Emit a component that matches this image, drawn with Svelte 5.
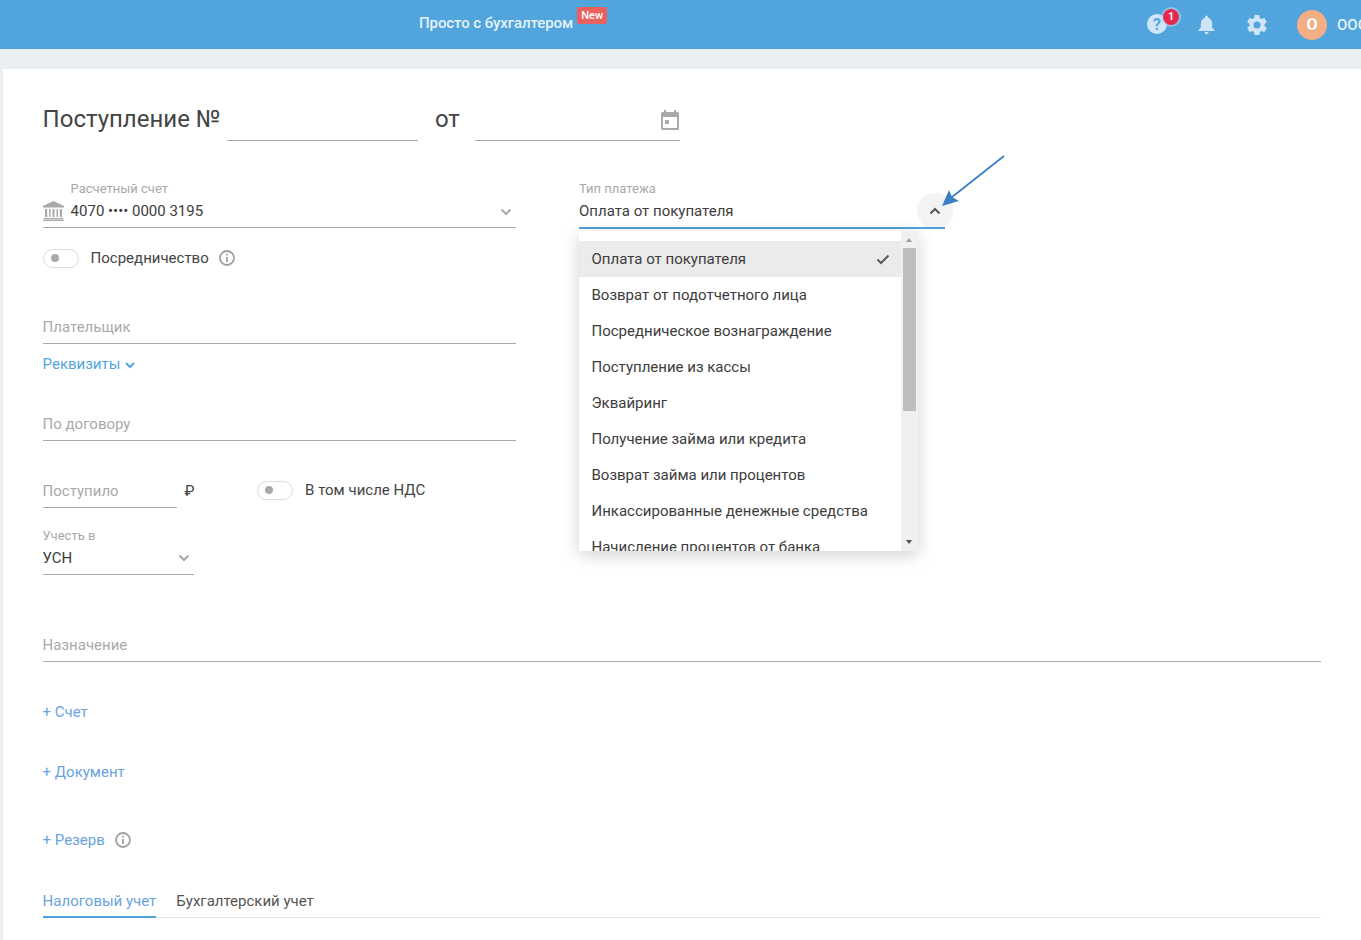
<script>
  const options = [
    'Оплата от покупателя',
    'Возврат от подотчетного лица',
    'Посредническое вознаграждение',
    'Поступление из кассы',
    'Эквайринг',
    'Получение займа или кредита',
    'Возврат займа или процентов',
    'Инкассированные денежные средства',
    'Начисление процентов от банка'
  ];
</script>

<div class="page">
  <header class="topbar">
    <div class="promo">
      <span class="promo-text">Просто с бухгалтером</span>
      <span class="new">New</span>
    </div>
    <div class="actions">
      <div class="help">
        <svg width="20" height="20" viewBox="0 0 20 20"><circle cx="10" cy="10" r="10" fill="#cfe5f7"/><text x="10" y="16" text-anchor="middle" class="qmark">?</text></svg>
        <span class="badge">1</span>
      </div>
      <svg class="bell" width="17" height="20" viewBox="0 0 18 20"><path fill="#cfe5f7" d="M9 0a1.600 1.600 0 0 1 1.600 1.600v.6C13.400 3 15 5.400 15 8.400v4.400l2.500 2.600v.9H.5v-.9L3 12.800V8.400C3 5.400 4.600 3 7.400 2.200v-.6A1.600 1.600 0 0 1 9 0zM6.800 17.500h4.400a2.200 2.200 0 0 1-4.400 0z"/></svg>
      <svg class="gear" width="24" height="24" viewBox="0 0 24 24"><path fill="#cfe5f7" d="M19.430 12.980c.04-.32.07-.64.07-.98s-.03-.66-.07-.98l2.110-1.650c.19-.15.24-.42.12-.64l-2-3.460c-.12-.22-.39-.3-.61-.22l-2.490 1c-.52-.4-1.080-.73-1.690-.98l-.38-2.650A.49.490 0 0 0 14 2h-4c-.25 0-.46.180-.49.420l-.38 2.650c-.61.250-1.170.59-1.690.98l-2.490-1c-.23-.09-.49 0-.61.220l-2 3.460c-.13.220-.07.490.12.640l2.110 1.650c-.04.320-.07.650-.07.980s.03.660.07.980l-2.110 1.650c-.19.150-.24.420-.12.640l2 3.460c.12.220.39.300.61.220l2.490-1c.52.400 1.080.730 1.690.980l.38 2.650c.03.240.24.420.49.420h4c.25 0 .46-.180.49-.420l.38-2.650c.61-.250 1.170-.590 1.690-.980l2.490 1c.23.090.49 0 .61-.220l2-3.460c.12-.220.07-.490-.12-.640l-2.110-1.650zM12 15.500a3.500 3.500 0 1 1 0-7 3.500 3.500 0 0 1 0 7z"/></svg>
      <span class="avatar">О</span>
      <span class="org">ООО</span>
    </div>
  </header>

  <main class="card">
    <div class="title-row">
      <h1 class="title">Поступление №</h1>
      <span class="line number"></span>
      <span class="title ot">от</span>
      <span class="line date">
        <svg width="20" height="20" viewBox="0 0 20 20"><path fill="#a9a9a9" d="M4 0h2v2h8V0h2v2h1.500A1.500 1.500 0 0 1 19 3.500v15a1.500 1.500 0 0 1-1.500 1.500h-15A1.500 1.500 0 0 1 1 18.500v-15A1.500 1.500 0 0 1 2.500 2H4zM3 7v11h14V7zm2 3h4v4H5z"/></svg>
      </span>
    </div>

    <div class="columns">
      <div class="left">
        <div class="field account">
          <svg class="bank" width="21" height="20" viewBox="0 0 21 20"><path fill="#a9a9a9" d="M10.500 0 21 5v1.500H0V5zM2 8h2.200v8H2zm4 0h1.500v8H6zm3.500 0h2v8h-2zm4 0H15v8h-1.500zm3.300 0H19v8h-2.200zM1 17h19v1.200H1zM0 18.800h21V20H0z"/></svg>
          <div class="value-wrap">
            <span class="label">Расчетный счет</span>
            <span class="value">4070 •••• 0000 3195</span>
          </div>
          <svg class="chev" width="12" height="8" viewBox="0 0 12 8"><path d="M1.500 1.500 6 6l4.500-4.500" fill="none" stroke="#a9a9a9" stroke-width="2"/></svg>
        </div>

        <div class="switch-row mediator">
          <span class="toggle"><i></i></span>
          <span class="text">Посредничество</span>
          <svg class="info" width="16" height="16" viewBox="0 0 16 16"><circle cx="8" cy="8" r="7" fill="none" stroke="#a0a0a0" stroke-width="1.800"/><path fill="#a0a0a0" d="M7.100 7h1.800v5H7.100zM7.100 3.800h1.800v1.800H7.100z"/></svg>
        </div>

        <div class="field payer"><span class="placeholder">Плательщик</span></div>
        <a class="link details">Реквизиты
          <svg width="10" height="7" viewBox="0 0 10 7"><path d="M1 1l4 4 4-4" fill="none" stroke="#52a5dc" stroke-width="2"/></svg>
        </a>
        <div class="field contract"><span class="placeholder">По договору</span></div>

        <div class="amount-row">
          <div class="field amount"><span class="placeholder">Поступило</span></div>
          <span class="rub">₽</span>
          <div class="switch-row vat">
            <span class="toggle"><i></i></span>
            <span class="text">В том числе НДС</span>
          </div>
        </div>

        <div class="field tax">
          <div class="value-wrap">
            <span class="label">Учесть в</span>
            <span class="value">УСН</span>
          </div>
          <svg class="chev" width="12" height="8" viewBox="0 0 12 8"><path d="M1.500 1.500 6 6l4.500-4.500" fill="none" stroke="#a9a9a9" stroke-width="2"/></svg>
        </div>
      </div>

      <div class="right">
        <div class="field type">
          <div class="value-wrap">
            <span class="label">Тип платежа</span>
            <span class="value">Оплата от покупателя</span>
          </div>
          <span class="round">
            <svg width="12" height="8" viewBox="0 0 12 8"><path d="M1.500 6.500 6 2l4.500 4.500" fill="none" stroke="#555" stroke-width="2"/></svg>
          </span>
        </div>

        <div class="menu">
          <ul class="list">
            {#each options as option, i}
              <li class:selected={i === 0}>
                <span>{option}</span>
                {#if i === 0}
                  <svg width="14" height="11" viewBox="0 0 14 11"><path d="M1.500 5.500 5 9l7.500-7.500" fill="none" stroke="#5a5a5a" stroke-width="2"/></svg>
                {/if}
              </li>
            {/each}
          </ul>
          <div class="scrollbar">
            <span class="up"></span>
            <span class="thumb"></span>
            <span class="down"></span>
          </div>
        </div>

        <svg class="arrow" width="66" height="54" viewBox="0 0 66 54">
          <path d="M65 1 8 46" stroke="#3a80c2" stroke-width="1.800" fill="none"/>
          <path d="M3 51 10 35 13 42 20 46z" fill="#3a80c2"/>
        </svg>
      </div>
    </div>

    <div class="field purpose"><span class="placeholder">Назначение</span></div>

    <a class="link add account-add">+ Счет</a>
    <a class="link add doc-add">+ Документ</a>
    <div class="reserve">
      <a class="link add">+ Резерв</a>
      <svg class="info" width="16" height="16" viewBox="0 0 16 16"><circle cx="8" cy="8" r="7" fill="none" stroke="#a0a0a0" stroke-width="1.800"/><path fill="#a0a0a0" d="M7.100 7h1.800v5H7.100zM7.100 3.800h1.800v1.800H7.100z"/></svg>
    </div>

    <nav class="tabs">
      <span class="tab active">Налоговый учет</span>
      <span class="tab">Бухгалтерский учет</span>
    </nav>
  </main>
</div>

<style>
  :global(body) {
    margin: 0;
    background: #ebeff2;
    overflow: hidden;
  }
  .page {
    height: 940px;
    overflow: hidden;
    font-family: Roboto, sans-serif;
    font-size: 15px;
    color: #444;
  }
  .topbar {
    height: 49px;
    background: #52a5dc;
    display: flex;
    justify-content: space-between;
    align-items: center;
    padding-left: 419px;
    box-sizing: border-box;
    overflow: hidden;
  }
  .promo {
    display: flex;
    align-items: flex-start;
    color: #e4f1fb;
    font-weight: 500;
    margin-top: -8px;
  }
  .promo-text {
    margin-top: 5px;
    letter-spacing: -0.08px;
  }
  .new {
    margin-left: 4px;
    margin-top: -2px;
    background: #e8615f;
    color: #fff;
    font-size: 11px;
    line-height: 17px;
    padding: 0 4px;
    border-radius: 2px;
    font-weight: 500;
  }
  .actions {
    display: flex;
    align-items: center;
    width: 215px;
    flex: none;
    white-space: nowrap;
    margin-right: -1px;
  }
  .help {
    position: relative;
    width: 20px;
    height: 20px;
    margin-top: -1px;
    flex: none;
  }
  .help svg {
    display: block;
  }
  .qmark {
    font: 700 16px Roboto, sans-serif;
    fill: #52a5dc;
  }
  .badge {
    position: absolute;
    left: 16px;
    top: -5px;
    width: 16px;
    height: 16px;
    border-radius: 50%;
    background: #e8294f;
    color: #fff;
    font-size: 10px;
    font-weight: 700;
    line-height: 16px;
    text-align: center;
    box-shadow: 0 0 0 2px rgba(180, 215, 240, 0.6);
  }
  .bell {
    margin-left: 31px;
    flex: none;
  }
  .gear {
    margin-left: 30px;
    flex: none;
  }
  .avatar {
    margin-left: 28px;
    width: 30px;
    height: 30px;
    flex: none;
    border-radius: 50%;
    background: #f4ae85;
    color: #fff;
    font-weight: 700;
    font-size: 16px;
    line-height: 30px;
    text-align: center;
  }
  .org {
    margin-left: 10px;
    color: #e4f1fb;
    font-weight: 500;
    font-size: 15px;
  }

  .card {
    margin: 20px 0 0 3px;
    background: #fff;
    height: 871px;
    padding: 0 40px 0 39.600px;
    box-sizing: border-box;
  }
  .title-row {
    padding-top: 31px;
    display: flex;
    align-items: flex-end;
    height: 72px;
    box-sizing: border-box;
  }
  .title {
    margin: 0;
    font-size: 24px;
    font-weight: 400;
    line-height: 36px;
    height: 40px;
    color: #444;
  }
  .line {
    display: flex;
    justify-content: flex-end;
    align-items: center;
    box-sizing: border-box;
    height: 40px;
    border-bottom: 1px solid #aaa;
  }
  .number {
    width: 191px;
    margin-left: 6.400px;
  }
  .ot {
    margin-left: 17px;
  }
  .date {
    width: 205px;
    margin-left: 15px;
  }
  .date svg {
    margin-bottom: 2px;
  }

  .columns {
    display: grid;
    grid-template-columns: 473px 366px;
    column-gap: 63.400px;
    align-items: start;
    margin-top: 39px;
  }
  .field {
    display: flex;
    align-items: flex-end;
    border-bottom: 1px solid #aaa;
    box-sizing: border-box;
  }
  .value-wrap {
    flex: 1;
    display: flex;
    flex-direction: column;
  }
  .label {
    font-size: 13px;
    color: #a9a9a9;
    line-height: 16px;
  }
  .value {
    color: #3d3d3d;
    line-height: 18px;
    margin-top: 5px;
    margin-bottom: 7px;
  }
  .placeholder {
    color: #a9a9a9;
    line-height: 18px;
    margin-bottom: 7px;
  }
  .account {
    height: 48px;
  }
  .bank {
    margin: 0 7px 6px 0;
    flex: none;
  }
  .chev {
    margin: 0 4px 11px 0;
    flex: none;
  }
  .switch-row {
    display: flex;
    align-items: center;
  }
  .mediator {
    height: 20px;
    margin-top: 20px;
  }
  .toggle {
    width: 36px;
    height: 19px;
    box-sizing: border-box;
    border: 1px solid #ddd;
    border-radius: 10px;
    display: flex;
    align-items: center;
    padding-left: 7px;
    flex: none;
  }
  .toggle i {
    width: 8px;
    height: 8px;
    border-radius: 50%;
    background: #a9a9a9;
  }
  .text {
    margin-left: 12px;
    color: #444;
    white-space: nowrap;
  }
  .info {
    flex: none;
  }
  .mediator .info {
    margin-left: 10px;
  }
  .payer {
    height: 36px;
    margin-top: 40px;
  }
  .link {
    color: #52a5dc;
    display: block;
  }
  .details {
    display: flex;
    align-items: center;
    gap: 5px;
    line-height: 18px;
    margin-top: 11px;
  }
  .details svg {
    margin-top: 2px;
  }
  .contract {
    height: 36px;
    margin-top: 32px;
  }
  .amount-row {
    display: flex;
    align-items: flex-end;
    margin-top: 31px;
  }
  .amount {
    width: 134px;
    height: 36px;
  }
  .rub {
    margin: 0 0 8px 8px;
    line-height: 18px;
    width: 72px;
  }
  .vat {
    margin-bottom: 8px;
    height: 20px;
  }
  .vat .text {
    margin-left: 12.500px;
  }
  .tax {
    width: 151px;
    height: 47px;
    margin-top: 20px;
  }
  .tax .chev {
    margin-bottom: 12px;
  }

  .right {
    position: relative;
  }
  .type {
    height: 49px;
    border-bottom: none;
    padding-bottom: 2px;
  }
  .type::after {
    content: '';
    position: absolute;
    left: 0;
    top: 47px;
    width: 366px;
    height: 2px;
    background: #4ea1da;
  }
  .round {
    position: absolute;
    left: 338px;
    top: 13px;
    width: 36px;
    height: 36px;
    border-radius: 50%;
    background: #f3f3f3;
    display: flex;
    align-items: center;
    justify-content: center;
  }
  .menu {
    position: absolute;
    left: 0;
    top: 51px;
    width: 339px;
    height: 320px;
    background: #fff;
    box-shadow: 0 4px 16px rgba(0, 0, 0, 0.18);
    display: flex;
    overflow: hidden;
    z-index: 2;
  }
  .list {
    list-style: none;
    margin: 10px 0 0;
    padding: 0;
    flex: 1;
  }
  .list li {
    height: 36px;
    display: flex;
    align-items: center;
    justify-content: space-between;
    padding: 0 11px 0 12.500px;
    color: #3d3d3d;
  }
  .selected {
    background: #ebebeb;
  }
  .scrollbar {
    width: 17px;
    background: #f0f0f0;
    flex: none;
    position: relative;
  }
  .thumb {
    position: absolute;
    left: 2px;
    top: 17px;
    width: 13px;
    height: 163px;
    background: #bdbdbd;
  }
  .up,
  .down {
    position: absolute;
    left: 5px;
    width: 0;
    height: 0;
    border-left: 3.500px solid transparent;
    border-right: 3.500px solid transparent;
  }
  .up {
    top: 7px;
    border-bottom: 4px solid #a0a0a0;
  }
  .down {
    bottom: 7px;
    border-top: 4px solid #505050;
  }
  .arrow {
    position: absolute;
    left: 360px;
    top: -25px;
    z-index: 3;
  }

  .purpose {
    height: 36px;
    margin-top: 51px;
  }
  .add {
    line-height: 18px;
    color: #6aa3dd;
  }
  .account-add {
    margin-top: 41px;
  }
  .doc-add {
    margin-top: 42px;
  }
  .reserve {
    display: flex;
    align-items: center;
    gap: 10px;
    margin-top: 50px;
    height: 18px;
  }
  .tabs {
    display: flex;
    gap: 20px;
    margin-top: 35px;
    border-bottom: 1px solid #e2e2e2;
    height: 34px;
    box-sizing: border-box;
  }
  .tab {
    line-height: 18px;
    height: 34px;
    padding-top: 8px;
    box-sizing: border-box;
    color: #555;
  }
  .active {
    color: #6aa3dd;
    border-bottom: 2px solid #4ea1da;
  }
</style>
